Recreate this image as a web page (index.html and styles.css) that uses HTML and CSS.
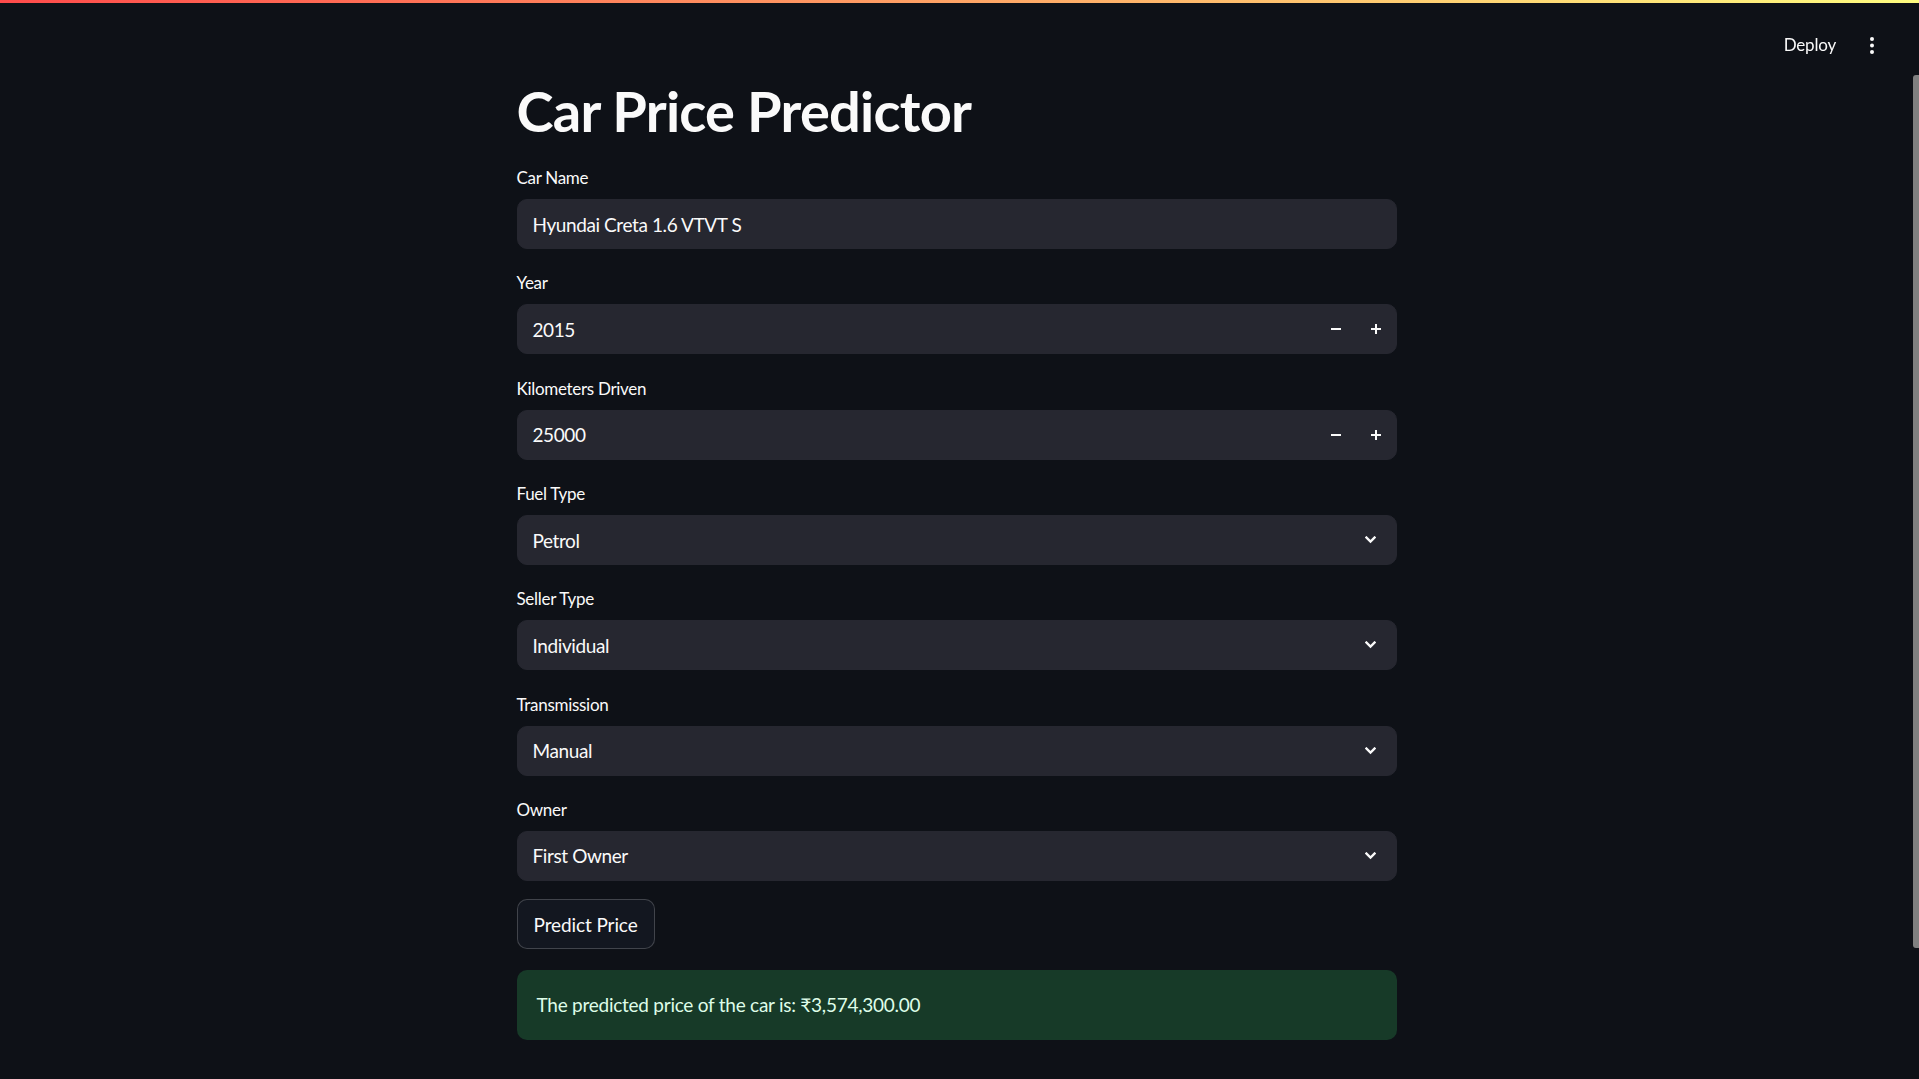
FILE: index.html
```html
<!DOCTYPE html>
<html lang="en">
<head>
<meta charset="utf-8">
<title>Car Price Predictor</title>
<link rel="stylesheet" href="styles.css">
</head>
<body>
<div class="decoration"></div>
<header class="toolbar">
  <span class="deploy">Deploy</span>
  <svg class="menu-dots" width="4" height="17" viewBox="0 0 4 17"><circle cx="2" cy="2" r="2"/><circle cx="2" cy="8.5" r="2"/><circle cx="2" cy="15" r="2"/></svg>
</header>
<div class="app">
  <main class="main">
    <div class="block">
      <h1 class="title">Car Price Predictor</h1>

      <div class="field">
        <label class="label">Car Name</label>
        <div class="input"><span class="value">Hyundai Creta 1.6 VTVT S</span></div>
      </div>

      <div class="field">
        <label class="label">Year</label>
        <div class="input number">
          <span class="value">2015</span>
          <span class="step"><svg width="10" height="10" viewBox="0 0 10 10"><rect x="0" y="4" width="10" height="2"/></svg></span>
          <span class="step"><svg width="10" height="10" viewBox="0 0 10 10"><rect x="0" y="4" width="10" height="2"/><rect x="4" y="0" width="2" height="10"/></svg></span>
        </div>
      </div>

      <div class="field">
        <label class="label">Kilometers Driven</label>
        <div class="input number">
          <span class="value">25000</span>
          <span class="step"><svg width="10" height="10" viewBox="0 0 10 10"><rect x="0" y="4" width="10" height="2"/></svg></span>
          <span class="step"><svg width="10" height="10" viewBox="0 0 10 10"><rect x="0" y="4" width="10" height="2"/><rect x="4" y="0" width="2" height="10"/></svg></span>
        </div>
      </div>

      <div class="field">
        <label class="label">Fuel Type</label>
        <div class="input select">
          <span class="value">Petrol</span>
          <svg class="chevron" width="11" height="8" viewBox="0 0 11 8"><polyline points="1.5,1.5 5.5,5.5 9.5,1.5"/></svg>
        </div>
      </div>

      <div class="field">
        <label class="label">Seller Type</label>
        <div class="input select">
          <span class="value">Individual</span>
          <svg class="chevron" width="11" height="8" viewBox="0 0 11 8"><polyline points="1.5,1.5 5.5,5.5 9.5,1.5"/></svg>
        </div>
      </div>

      <div class="field">
        <label class="label">Transmission</label>
        <div class="input select">
          <span class="value">Manual</span>
          <svg class="chevron" width="11" height="8" viewBox="0 0 11 8"><polyline points="1.5,1.5 5.5,5.5 9.5,1.5"/></svg>
        </div>
      </div>

      <div class="field">
        <label class="label">Owner</label>
        <div class="input select">
          <span class="value">First Owner</span>
          <svg class="chevron" width="11" height="8" viewBox="0 0 11 8"><polyline points="1.5,1.5 5.5,5.5 9.5,1.5"/></svg>
        </div>
      </div>

      <div class="actions">
        <button class="btn" type="button">Predict Price</button>
      </div>

      <div class="alert-success">The predicted price of the car is: ₹3,574,300.00</div>
    </div>
  </main>
  <div class="scrolltrack"><div class="thumb"></div></div>
</div>
</body>
</html>
```
FILE: styles.css
```css
html, body {
  margin: 0;
  padding: 0;
  height: 100%;
}
body {
  background: #0e1117;
  color: #fafafa;
  font-family: "Source Sans Pro", Lato, "Noto Sans", sans-serif;
  overflow: hidden;
}
.decoration {
  position: fixed;
  top: 0;
  left: 0;
  right: 0;
  height: 3px;
  background: linear-gradient(90deg, rgb(255, 75, 75), rgb(255, 253, 128));
  z-index: 10;
}
.toolbar {
  position: fixed;
  top: 3px;
  right: 0;
  height: 84px;
  display: flex;
  align-items: center;
  gap: 34px;
  padding-right: 45px;
  z-index: 5;
}
.deploy {
  font-size: 17px;
  line-height: 20px;
  letter-spacing: -0.2px;
  color: #fafafa;
}
.menu-dots {
  fill: #fafafa;
  display: block;
}
.app {
  display: flex;
  height: 100%;
}
.main {
  flex: 1;
  min-width: 0;
}
.block {
  width: 880px;
  margin: 0 auto;
  padding-top: 77px;
  display: flex;
  flex-direction: column;
}
.title {
  margin: 0 0 24px 0;
  font-size: 56px;
  line-height: 1.2;
  font-weight: 700;
  color: #fafafa;
  letter-spacing: -0.75px;
}
.field {
  display: flex;
  flex-direction: column;
}
.field + .field {
  margin-top: 24.3px;
}
.label {
  font-size: 17px;
  line-height: 20px;
  margin-bottom: 11px;
  letter-spacing: -0.3px;
  color: #fafafa;
}
.input {
  height: 50px;
  box-sizing: border-box;
  background: #262730;
  border: 1px solid #262730;
  border-radius: 10px;
  display: flex;
  align-items: center;
  padding-left: 15px;
  font-size: 19px;
  letter-spacing: -0.4px;
  color: #fafafa;
}
.value {
  flex: 1;
  min-width: 0;
}
.number {
  padding-right: 0;
}
.step {
  width: 40px;
  height: 100%;
  display: flex;
  align-items: center;
  justify-content: center;
}
.step svg {
  fill: #fafafa;
  display: block;
}
.select {
  padding-right: 20px;
}
.chevron {
  display: block;
  fill: none;
  stroke: #fafafa;
  stroke-width: 2.3;
  stroke-linecap: square;
}
.actions {
  margin-top: 18.5px;
  display: flex;
}
.btn {
  height: 50px;
  box-sizing: border-box;
  padding: 0 16px;
  background: rgb(19, 23, 32);
  border: 1px solid rgba(250, 250, 250, 0.2);
  border-radius: 10px;
  color: #fafafa;
  font-family: inherit;
  font-size: 19px;
  letter-spacing: -0.1px;
}
.alert-success {
  margin-top: 20.3px;
  background: #173a28;
  color: #dffde9;
  border-radius: 10px;
  padding: 20px 20px;
  font-size: 19px;
  letter-spacing: -0.25px;
  line-height: 30px;
}
.scrolltrack {
  width: 6px;
  flex: none;
}
.thumb {
  margin-top: 75px;
  height: 873px;
  background: #808080;
  border-radius: 3px 0 0 3px;
}
```
